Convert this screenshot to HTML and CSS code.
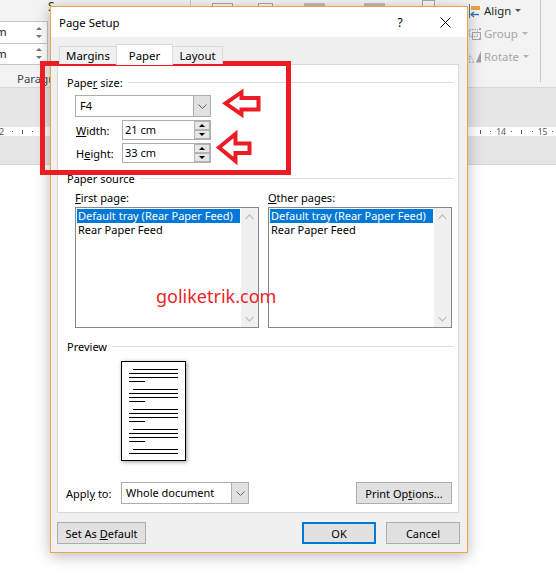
FILE: index.html
```html
<!DOCTYPE html>
<html lang="en">
<head>
<meta charset="utf-8">
<title>Page Setup</title>
<link rel="stylesheet" href="styles.css">
</head>
<body>
<div class="word">
  <div class="ribbon">
    <div class="rb-left">
      <div class="rb-field f1"><span class="rb-val">m</span><span class="rb-spin"><i class="tri-up"></i><i class="tri-dn"></i></span></div>
      <div class="rb-field f2"><span class="rb-val">m</span><span class="rb-spin"><i class="tri-up"></i><i class="tri-dn"></i></span></div>
      <div class="rb-group">Paragraph</div>
    </div>
    <div class="rb-peek">
      <span class="pk-s">S</span>
      <span class="pk-vline"></span>
      <span class="pk-box pk-b1"></span>
      <span class="pk-box pk-b2"></span>
      <span class="pk-bar pk-r1"></span>
      <span class="pk-bar pk-r2"></span>
      <span class="pk-box pk-b3"></span>
    </div>
    <div class="rb-right">
      <div class="rb-arrange">
        <div class="rb-item">
          <svg class="rb-ico" width="14" height="14" viewBox="0 0 14 14">
            <path d="M1.5 0V14" stroke="#6d6d6d" stroke-width="1"/>
            <rect x="3" y="2" width="9" height="4" fill="#e6a24a"/>
            <path d="M3 10.5H11" stroke="#2e6fc4" stroke-width="1.4"/>
            <path d="M6 8L3 10.5L6 13" stroke="#2e6fc4" stroke-width="1.2" fill="none"/>
          </svg>
          <span class="rb-txt">Align</span><i class="caret"></i>
        </div>
        <div class="rb-item dis">
          <svg class="rb-ico" width="14" height="14" viewBox="0 0 14 14">
            <rect x="1.5" y="2.5" width="8" height="7" fill="none" stroke="#a8a8a8" stroke-dasharray="1.5 1"/>
            <rect x="4.5" y="5.5" width="8" height="7" fill="none" stroke="#a8a8a8"/>
            <rect x="11" y="1" width="2" height="2" fill="#a8a8a8"/>
            <rect x="11" y="11" width="2" height="2" fill="#a8a8a8"/>
          </svg>
          <span class="rb-txt">Group</span><i class="caret"></i>
        </div>
        <div class="rb-item dis">
          <svg class="rb-ico" width="14" height="14" viewBox="0 0 14 14">
            <path d="M1.5 12.5V4.5L6 12.5Z" fill="none" stroke="#b0b0b0" stroke-dasharray="1.5 1"/>
            <path d="M8 12.5L13 1V12.5Z" fill="#a0a0a0"/>
          </svg>
          <span class="rb-txt">Rotate</span><i class="caret"></i>
        </div>
      </div>
      <div class="rb-sep"></div>
    </div>
  </div>
  <div class="band"></div>
  <div class="ruler">
    <div class="rl rl-left"><span>2</span><span><i class="dot"></i></span><span><i class="tick"></i></span><span><i class="dot"></i></span></div>
    <div class="rl rl-right"><span><i class="tick"></i></span><span><i class="dot"></i></span><span>14</span><span><i class="dot"></i></span><span><i class="tick"></i></span><span><i class="dot"></i></span><span>15</span><span><i class="dot"></i></span></div>
  </div>
  <div class="band band2"></div>
  <div class="doc"></div>
</div>

<div class="dialog">
  <div class="titlebar">
    <div class="title">Page Setup</div>
    <div class="tb-btn tb-help">?</div>
    <div class="tb-btn tb-close">
      <svg width="11" height="11" viewBox="0 0 11 11"><path d="M0.5 0.5L10.5 10.5M10.5 0.5L0.5 10.5" stroke="#000" stroke-width="1"/></svg>
    </div>
  </div>
  <div class="dbody">
    <div class="tabs">
      <div class="tab margins">Margins</div>
      <div class="tab paper">Paper</div>
      <div class="tab layout">Layout</div>
    </div>
    <div class="panel">
      <div class="ghead first"><span>Pape<u>r</u> size:</span></div>
      <div class="combo size-combo">
        <span class="cval">F4</span>
        <span class="cbtn"><svg width="9" height="5" viewBox="0 0 9 5"><path d="M0.5 0.5L4.5 4.5L8.5 0.5" fill="none" stroke="#606060" stroke-width="1"/></svg></span>
      </div>
      <div class="srow">
        <span class="lbl"><u>W</u>idth:</span>
        <div class="spin">
          <span class="sval">21 cm</span>
          <span class="sbtns"><span class="sbtn"><i class="stri-up"></i></span><span class="sbtn"><i class="stri-dn"></i></span></span>
        </div>
      </div>
      <div class="srow">
        <span class="lbl">H<u>e</u>ight:</span>
        <div class="spin">
          <span class="sval">33 cm</span>
          <span class="sbtns"><span class="sbtn"><i class="stri-up"></i></span><span class="sbtn"><i class="stri-dn"></i></span></span>
        </div>
      </div>

      <div class="ghead second"><span>Paper source</span></div>
      <div class="sources">
        <div class="src">
          <span class="slbl"><u>F</u>irst page:</span>
          <div class="listbox">
            <div class="items">
              <div class="item sel">Default tray (Rear Paper Feed)</div>
              <div class="item">Rear Paper Feed</div>
            </div>
            <div class="vscroll">
              <span><svg width="9" height="6" viewBox="0 0 9 6"><path d="M0.5 5L4.5 1L8.5 5" fill="none" stroke="#c4c4c4" stroke-width="1.3"/></svg></span>
              <span><svg width="9" height="6" viewBox="0 0 9 6"><path d="M0.5 1L4.5 5L8.5 1" fill="none" stroke="#c4c4c4" stroke-width="1.3"/></svg></span>
            </div>
          </div>
        </div>
        <div class="src">
          <span class="slbl"><u>O</u>ther pages:</span>
          <div class="listbox">
            <div class="items">
              <div class="item sel">Default tray (Rear Paper Feed)</div>
              <div class="item">Rear Paper Feed</div>
            </div>
            <div class="vscroll">
              <span><svg width="9" height="6" viewBox="0 0 9 6"><path d="M0.5 5L4.5 1L8.5 5" fill="none" stroke="#c4c4c4" stroke-width="1.3"/></svg></span>
              <span><svg width="9" height="6" viewBox="0 0 9 6"><path d="M0.5 1L4.5 5L8.5 1" fill="none" stroke="#c4c4c4" stroke-width="1.3"/></svg></span>
            </div>
          </div>
        </div>
      </div>

      <div class="ghead third"><span>Preview</span></div>
      <div class="page">
        <svg width="63" height="98" viewBox="0 0 63 98">
          <path stroke="#000" stroke-width="1" fill="none" d="M11 7.5H56M7 11.5H56M7 15.5H56M7 19.5H23M11 27.5H56M7 31.5H56M7 35.5H56M7 39.5H23M11 47.5H56M7 51.5H56M7 55.5H56M7 59.5H23M11 67.5H56M7 71.5H56M7 75.5H56M7 79.5H23M11 87.5H56M7 91.5H56"/>
        </svg>
      </div>

      <div class="applyrow">
        <span class="alabel">Appl<u>y</u> to:</span>
        <div class="combo apply-combo">
          <span class="cval">Whole document</span>
          <span class="cbtn"><svg width="9" height="5" viewBox="0 0 9 5"><path d="M0.5 0.5L4.5 4.5L8.5 0.5" fill="none" stroke="#606060" stroke-width="1"/></svg></span>
        </div>
        <div class="btn print"><span>Print Op<u>t</u>ions...</span></div>
      </div>
    </div>
    <div class="footer">
      <div class="btn def"><span>Set As <u>D</u>efault</span></div>
      <div class="btn ok"><span>OK</span></div>
      <div class="btn cancel"><span>Cancel</span></div>
    </div>
  </div>
</div>

<div class="watermark">goliketrik.com</div>

<svg class="annot" width="556" height="574" viewBox="0 0 556 574">
  <rect x="42.5" y="63.5" width="246" height="109" fill="none" stroke="#ec1c24" stroke-width="5"/>
  <path d="M225.5 103.3L241.5 92.2V98H258.5V109.5H241.5V114.5Z" fill="none" stroke="#ec1c24" stroke-width="4" stroke-linejoin="miter"/>
  <path d="M219 147.5L235.5 134V143.5H249.5V153H235.5V161Z" fill="none" stroke="#ec1c24" stroke-width="4" stroke-linejoin="miter"/>
</svg>
</body>
</html>
```
FILE: styles.css
```css
* { box-sizing: border-box; margin: 0; padding: 0; }
html, body { width: 556px; height: 574px; overflow: hidden; }
body {
  position: relative;
  font-family: "Noto Sans", "Open Sans", sans-serif;
  font-size: 11px;
  color: #000;
  background: #fff;
}
u { text-decoration: underline; text-underline-offset: 1px; }

/* ---------- Word window behind ---------- */
.word { display: flex; flex-direction: column; height: 574px; }
.ribbon {
  height: 88px;
  background: #f3f3f3;
  border-bottom: 1px solid #d6d6d6;
  display: flex;
  flex-shrink: 0;
}
.rb-left { width: 48px; display: flex; flex-direction: column; }
.rb-field {
  width: 48px;
  background: #fff;
  border: 1px solid #c6c6c6;
  border-left: none;
  display: flex;
  justify-content: space-between;
  align-items: center;
  overflow: hidden;
  color: #222;
  font-size: 11.4px;
}
.rb-field.f1 { margin-top: 21px; height: 23px; }
.rb-field.f2 { height: 22px; border-top: none; }
.rb-val { margin-left: -4px; line-height: 16px; }
.rb-spin {
  display: flex;
  flex-direction: column;
  gap: 5px;
  margin-right: 5px;
}
.tri-up, .tri-dn { display: block; width: 0; height: 0; border-left: 3px solid transparent; border-right: 3px solid transparent; }
.tri-up { border-bottom: 3px solid #777; }
.tri-dn { border-top: 3px solid #777; }
.rb-group {
  width: 50px;
  margin-top: 6px;
  padding-left: 17px;
  line-height: 16px;
  font-size: 11.4px;
  color: #444;
  white-space: nowrap;
  overflow: hidden;
}

.rb-peek { width: 420px; height: 14px; display: flex; align-items: flex-start; }
.pk-s { width: 7px; font-size: 12px; line-height: 14px; color: #333; }
.pk-vline { width: 1px; height: 12px; background: #c6c6c6; margin-left: 135px; }
.pk-box { height: 12px; border: 1px solid #a8a8a8; margin-top: 3px; background: #f8f8f8; }
.pk-b1 { width: 21px; margin-left: 21px; }
.pk-b2 { width: 15px; margin-left: 25px; }
.pk-bar { width: 21px; height: 4px; background: #bdbdbd; margin-top: 3px; }
.pk-r1 { margin-left: 31px; }
.pk-r2 { margin-left: 39px; }
.pk-b3 { width: 13px; margin-left: 37px; margin-top: 0; }

.rb-right { flex: 1; display: flex; }
.rb-arrange { width: 72px; display: flex; flex-direction: column; margin-top: -1px; }
.rb-item { height: 23px; display: flex; align-items: center; color: #262626; font-size: 11.4px; }
.rb-item.dis { color: #a6a6a6; }
.rb-ico { flex-shrink: 0; }
.rb-txt { margin-left: 2px; }
.caret {
  width: 0; height: 0;
  margin-left: 4px;
  border-left: 3px solid transparent;
  border-right: 3px solid transparent;
  border-top: 3px solid #555;
}
.rb-item.dis .caret { border-top-color: #b4b4b4; }
.rb-sep { width: 1px; height: 82px; background: #c8c8c8; }

.band { height: 39px; background: #e6e6e6; flex-shrink: 0; }
.band2 { height: 29px; border-bottom: 1px solid #d6d6d6; }
.ruler {
  height: 9px;
  background: #fff;
  display: flex;
  justify-content: space-between;
  font-size: 8.5px;
  line-height: 9px;
  color: #555;
  flex-shrink: 0;
}
.rl { display: flex; }
.rl span { width: 10.4px; display: flex; align-items: center; justify-content: center; }
.rl-left { margin-left: -3.5px; }
.rl-right { margin-right: -2.2px; }
.dot { display: block; width: 1px; height: 1px; background: #555; }
.tick { display: block; width: 1px; height: 4px; background: #555; }
.doc { flex: 1; background: #fff; }

/* ---------- Dialog ---------- */
.dialog {
  position: absolute;
  left: 50px;
  top: 6px;
  width: 418px;
  height: 547px;
  border: 1px solid #eba544;
  background: #f0f0f0;
  box-shadow: 0 3px 14px rgba(0, 0, 0, 0.28);
  display: flex;
  flex-direction: column;
}
.titlebar { height: 30px; background: #fff; display: flex; align-items: center; flex-shrink: 0; }
.title { flex: 1; padding-left: 8px; font-size: 11.4px; }
.tb-btn { height: 30px; display: flex; align-items: center; justify-content: center; }
.tb-help { width: 46px; font-size: 12px; }
.tb-close { width: 44px; }

.dbody { flex: 1; padding: 7px 7px 8px 6px; display: flex; flex-direction: column; }
.tabs { height: 20px; display: flex; align-items: flex-end; margin-left: 2px; position: relative; z-index: 1; }
.tab {
  height: 18px;
  border: 1px solid #d9d9d9;
  border-bottom: none;
  background: #f0f0f0;
  display: flex;
  align-items: center;
  justify-content: center;
  font-size: 11.4px;
}
.tab.margins { width: 58px; }
.tab.paper { width: 57px; height: 21px; margin-left: -1px; margin-bottom: -1px; background: #fff; }
.tab.layout { width: 51px; margin-left: -1px; }

.panel {
  width: 402px;
  height: 449px;
  background: #fff;
  border: 1px solid #d9d9d9;
  display: flex;
  flex-direction: column;
  flex-shrink: 0;
}
.ghead {
  display: flex;
  align-items: center;
  height: 16px;
  padding: 0 5px 0 9px;
  white-space: nowrap;
}
.ghead::after { content: ""; flex: 1; height: 1px; background: #dcdcdc; margin-left: 5px; }
.ghead.first { margin-top: 9px; }
.ghead.second { margin-top: 7px; }
.ghead.third { margin-top: 10px; }

.combo { display: flex; height: 22px; border: 1px solid #adadad; background: #fff; }
.cval { flex: 1; padding-left: 4px; line-height: 20px; white-space: nowrap; }
.cbtn {
  width: 17px;
  background: #e1e1e1;
  border-left: 1px solid #adadad;
  display: flex;
  align-items: center;
  justify-content: center;
}
.size-combo { width: 136px; margin: 5px 0 0 17px; }

.srow { display: flex; align-items: center; height: 20px; margin: 3px 0 0 18px; }
.srow .lbl { width: 46px; }
.spin { width: 89px; height: 20px; border: 1px solid #adadad; display: flex; }
.sval { flex: 1; padding-left: 2px; line-height: 18px; }
.sbtns { width: 16px; display: flex; flex-direction: column; }
.sbtn {
  height: 9px;
  background: #e6e6e6;
  border: 1px solid #b4b4b4;
  display: flex;
  align-items: center;
  justify-content: center;
}
.stri-up, .stri-dn { display: block; width: 0; height: 0; border-left: 3px solid transparent; border-right: 3px solid transparent; }
.stri-up { border-bottom: 3px solid #000; }
.stri-dn { border-top: 3px solid #000; }

.sources { display: flex; gap: 9px; margin: 4px 0 0 17px; }
.src { width: 184px; display: flex; flex-direction: column; }
.slbl { height: 16px; line-height: 16px; }
.listbox { margin-top: 1px; height: 121px; border: 1px solid #828790; display: flex; }
.items { flex: 1; padding: 1px; }
.item { height: 14px; line-height: 14px; padding-left: 1px; white-space: nowrap; overflow: hidden; }
.item.sel { background: #0078d7; color: #fff; }
.vscroll { width: 17px; background: #f0f0f0; display: flex; flex-direction: column; justify-content: space-between; }
.vscroll span { height: 17px; display: flex; align-items: center; justify-content: center; }

.page {
  width: 65px;
  height: 100px;
  margin: 7px 0 0 63px;
  border: 1px solid #000;
  background: #fff;
  box-shadow: 1px 1px 4px rgba(0, 0, 0, 0.4);
}
.page svg { display: block; }

.applyrow { display: flex; align-items: center; height: 22px; margin-top: 21px; }
.alabel { width: 63px; padding-left: 8px; }
.apply-combo { width: 128px; }

.btn {
  height: 22px;
  border: 1px solid #adadad;
  background: #e1e1e1;
  display: flex;
  align-items: center;
  justify-content: center;
  white-space: nowrap;
}
.btn.print { width: 96px; margin-left: auto; margin-right: 6px; }
.footer { display: flex; height: 22px; margin-top: 9px; flex-shrink: 0; }
.btn.def { width: 89px; }
.btn.ok { width: 74px; margin-left: auto; border: 2px solid #0078d7; }
.btn.cancel { width: 74px; margin-left: 10px; }

/* ---------- Overlays ---------- */
.watermark {
  position: absolute;
  left: 156px;
  top: 284px;
  font-size: 18px;
  line-height: 24px;
  color: #ee1f28;
}
.annot { position: absolute; left: 0; top: 0; pointer-events: none; }
```
